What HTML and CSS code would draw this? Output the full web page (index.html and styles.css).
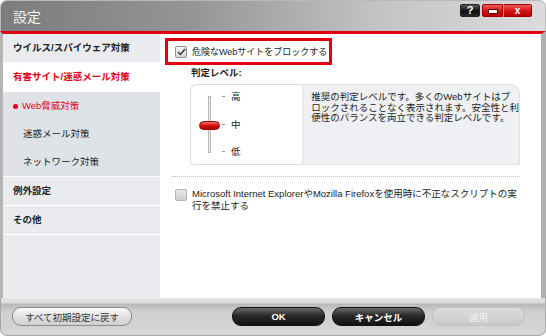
FILE: index.html
```html
<!DOCTYPE html>
<html lang="ja">
<head>
  <meta charset="UTF-8">
  <meta name="viewport" content="width=device-width, initial-scale=1.0">
  <title>設定</title>
  <link rel="stylesheet" href="styles.css">
</head>
<body>
  <div class="window">
    <div class="titlebar">
      <span class="title">設定</span>
      <div class="controls">
        <span class="ctl help">?</span>
        <span class="ctl min"><i></i></span>
        <span class="ctl close">x</span>
      </div>
    </div>

    <div class="frame">
      <ul class="nav">
        <li class="nav-item">ウイルス/スパイウェア対策</li>
        <li class="nav-item active">有害サイト/迷惑メール対策</li>
        <li class="sub">
          <div class="sub-item current"><span class="dot"></span>Web脅威対策</div>
          <div class="sub-item">迷惑メール対策</div>
          <div class="sub-item">ネットワーク対策</div>
        </li>
        <li class="nav-item">例外設定</li>
        <li class="nav-item">その他</li>
      </ul>

      <div class="content">
        <label class="block-option">
          <span class="check checked">
            <svg width="9" height="8" viewBox="0 0 9 8"><path d="M1 4 L3.5 6.5 L8 1" fill="none" stroke="#333" stroke-width="1.4"/></svg>
          </span>
          <span>危険なWebサイトをブロックする</span>
        </label>

        <div class="level-title">判定レベル:</div>

        <div class="level">
          <div class="slider">
            <div class="track">
              <span class="thumb"></span>
            </div>
            <div class="labels">
              <div class="label"><span class="tick"></span>高</div>
              <div class="label"><span class="tick"></span>中</div>
              <div class="label"><span class="tick"></span>低</div>
            </div>
          </div>
          <div class="info">
            推奨の判定レベルです。多くのWebサイトはブ<br>
            ロックされることなく表示されます。安全性と利<br>
            便性のバランスを両立できる判定レベルです。
          </div>
        </div>

        <div class="divider"></div>

        <label class="script-option">
          <span class="check disabled"></span>
          <span>Microsoft Internet ExplorerやMozilla Firefoxを使用時に不正なスクリプトの実<br>行を禁止する</span>
        </label>
      </div>
    </div>

    <div class="footer">
      <button class="btn light">すべて初期設定に戻す</button>
      <div class="actions">
        <button class="btn dark ok">OK</button>
        <button class="btn dark">キャンセル</button>
        <button class="btn off">適用</button>
      </div>
    </div>
  </div>
</body>
</html>
```

FILE: styles.css
```css
/* Settings dialog */
body {
  margin: 0;
  background: #ffffff;
  font-family: "Liberation Sans", "Noto Sans CJK JP", sans-serif;
  font-size: 9.5px;
  color: #222;
}
.window {
  width: 546px;
  height: 336px;
  display: flex;
  flex-direction: column;
}
.titlebar {
  height: 31px;
  box-sizing: border-box;
  border-radius: 7px 7px 0 0;
  border: 1px solid #b9b9b9;
  border-bottom: none;
  background: linear-gradient(90deg, #7c7c7c 0%, #959595 35%, #c4c4c4 70%, #dcdcdc 100%);
  display: flex;
  justify-content: space-between;
  padding: 0 13px 0 12px;
}
.title {
  color: #f4f4f4;
  font-family: "Noto Sans CJK JP", sans-serif;
  font-size: 14px;
  line-height: 30px;
}
.controls {
  display: flex;
  margin-top: 3px;
  height: 13px;
}
.ctl {
  display: flex;
  align-items: center;
  justify-content: center;
  height: 13px;
  border-radius: 2px;
  color: #fff;
  font-weight: bold;
  font-size: 11px;
  line-height: 13px;
  box-sizing: border-box;
}
.help {
  width: 20px;
  margin-right: 2px;
  background: linear-gradient(#5a5a5a, #111 55%, #262626);
  border: 1px solid #222;
}
.min {
  width: 21px;
  background: linear-gradient(#f05a5a, #d81616 50%, #b80000);
  border: 1px solid #a40000;
  border-radius: 2px 0 0 2px;
}
.min i {
  width: 8px;
  height: 3px;
  background: #fff;
  border: 1px solid #5a0000;
  margin-top: 2px;
}
.close {
  width: 29px;
  background: linear-gradient(#f05a5a, #d81616 50%, #b80000);
  border: 1px solid #a40000;
  border-left-color: #e88;
  border-radius: 0 2px 2px 0;
  font-size: 10px;
}
.frame {
  display: flex;
  height: 267px;
  box-sizing: border-box;
  border-top: 3px solid #e00010;
  border-left: 3px solid #b4b4b4;
  border-right: 5px solid #b0b0b0;
}
.nav {
  list-style: none;
  margin: 0;
  padding: 0;
  width: 157px;
  background: #e9ebee;
  font-weight: bold;
  font-size: 9.5px;
}
.nav-item {
  height: 28px;
  line-height: 28px;
  padding-left: 10px;
  border-bottom: 1px solid #ffffff;
}
.nav-item:first-child {
  border-bottom: none;
}
.nav-item.active {
  background: #ffffff;
  color: #e0001a;
  height: 30px;
  line-height: 30px;
  border-bottom: none;
}
.sub {
  background: #dfe2e6;
  border-bottom: 1px solid #ffffff;
  font-weight: normal;
}
.sub-item {
  height: 28px;
  line-height: 28px;
  padding-left: 20px;
  display: flex;
  align-items: center;
}
.sub-item.current {
  padding-left: 10px;
  color: #e0001a;
}
.dot {
  width: 5px;
  height: 5px;
  border-radius: 50%;
  background: #e0001a;
  margin-right: 4px;
}
.content {
  flex: 1;
  background: #ffffff;
  padding: 4px 0 0 5px;
}
.block-option {
  display: inline-flex;
  align-items: center;
  height: 27px;
  box-sizing: border-box;
  border: 3px solid #e60012;
  padding: 0 2px 0 7px;
  font-size: 9px;
  white-space: nowrap;
}
.check {
  width: 12px;
  height: 12px;
  box-sizing: border-box;
  border: 1px solid #8e8e8e;
  border-radius: 2px;
  background: linear-gradient(#f4f4f4, #d8d8d8);
  display: inline-flex;
  align-items: center;
  justify-content: center;
  margin-right: 5px;
  flex-shrink: 0;
}
.check.disabled {
  border-color: #b4b4b4;
  background: linear-gradient(#e8e8e8, #cfcfcf);
}
.level-title {
  font-weight: bold;
  margin: 2px 0 0 26px;
  line-height: 11px;
}
.level {
  display: flex;
  margin: 6px 0 0 25px;
  width: 330px;
  height: 81px;
}
.slider {
  width: 119px;
  box-sizing: border-box;
  border: 1px solid #dcdcdc;
  border-right: 1px solid #e4e4e4;
  border-radius: 7px 0 0 3px;
  display: flex;
  padding-left: 17px;
}
.track {
  position: relative;
  width: 3px;
  height: 57px;
  margin-top: 11px;
  box-sizing: border-box;
  border: 1px solid #b8b8b8;
  background: #eeeeee;
}
.thumb {
  position: absolute;
  left: -10px;
  top: 24px;
  width: 21px;
  height: 9px;
  border-radius: 5px;
  background: linear-gradient(#f07070, #d81010 50%, #a80000);
  border: 1px solid #9a0000;
  box-sizing: border-box;
}
.labels {
  display: flex;
  flex-direction: column;
  justify-content: space-between;
  height: 66px;
  margin: 6px 0 0 11px;
}
.label {
  display: flex;
  align-items: center;
  line-height: 11px;
}
.tick {
  width: 3px;
  height: 1px;
  background: #999;
  margin-right: 6px;
}
.info {
  flex: 1;
  background: #eef0f3;
  border: 1px solid #e0e2e5;
  border-left: none;
  border-radius: 0 9px 3px 0;
  padding: 7px 0 0 8px;
  line-height: 10.5px;
  white-space: nowrap;
}
.divider {
  margin: 11px 0 0 7px;
  width: 348px;
  border-top: 1px dotted #c4c4c4;
}
.script-option {
  display: flex;
  align-items: flex-start;
  margin: 11px 0 0 10px;
  line-height: 11.5px;
  white-space: nowrap;
}
.script-option .check {
  margin-top: 1px;
}
.footer {
  height: 38px;
  box-sizing: border-box;
  border: 1px solid #a8a8a8;
  border-top: none;
  border-radius: 0 0 7px 7px;
  background: linear-gradient(#e6e6e6 0, #dadada 5px, #b8b8b8 6px, #cfcfcf 14px, #d6d6d6 100%);
  display: flex;
  justify-content: space-between;
  align-items: center;
  padding: 0 20px 0 11px;
}
.actions {
  display: flex;
  gap: 7px;
}
.btn {
  height: 19px;
  border-radius: 9px;
  font-family: "Liberation Sans", "Noto Sans CJK JP", sans-serif;
  font-size: 9.5px;
  padding: 0;
  box-sizing: border-box;
}
.light {
  width: 120px;
  color: #333;
  border: 1px solid #8c8c8c;
  background: linear-gradient(#fafafa, #e2e2e2 50%, #cfcfcf);
}
.dark {
  width: 93px;
  color: #fff;
  font-weight: bold;
  border: 1px solid #111;
  background: linear-gradient(#6a6a6a, #2a2a2a 45%, #111 100%);
}
.off {
  width: 93px;
  color: #f2f2f2;
  border: 1px solid #c2c2c2;
  background: linear-gradient(#dedede, #c9c9c9);
}
```
